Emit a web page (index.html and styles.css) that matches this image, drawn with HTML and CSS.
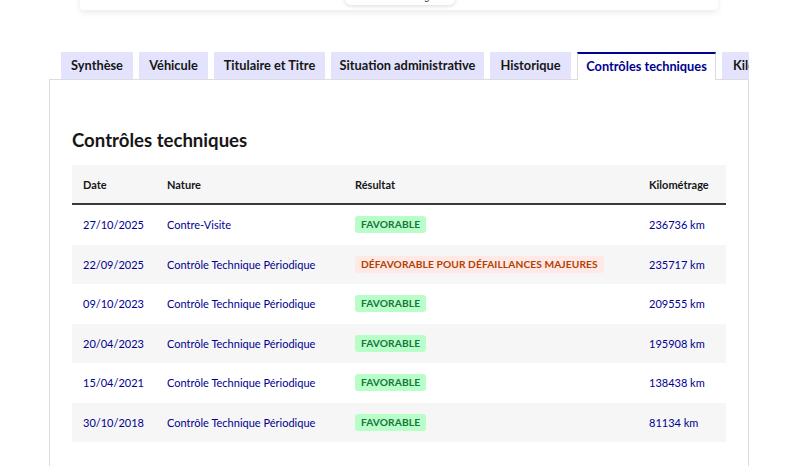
FILE: index.html
```html
<!DOCTYPE html>
<html lang="fr">
<head>
<meta charset="utf-8">
<link rel="stylesheet" href="styles.css">
</head>
<body>
<div class="topbar">
  <div class="url-pill">histovec.interieur.gouv.fr</div>
</div>
<div class="page">
  <nav class="tabs">
    <div class="tab w1">Synthèse</div>
    <div class="tab w2">Véhicule</div>
    <div class="tab w3">Titulaire et Titre</div>
    <div class="tab w4">Situation administrative</div>
    <div class="tab w5">Historique</div>
    <div class="tab w6 active">Contrôles techniques</div>
    <div class="tab cut">Kilométrage</div>
  </nav>
  <section class="panel">
    <h2 class="title">Contrôles techniques</h2>
    <div class="table">
      <div class="row head">
        <div>Date</div><div>Nature</div><div>Résultat</div><div>Kilométrage</div>
      </div>
      <div class="row">
        <div>27/10/2025</div><div>Contre-Visite</div><div><span class="badge ok">Favorable</span></div><div>236736 km</div>
      </div>
      <div class="row alt">
        <div>22/09/2025</div><div>Contrôle Technique Périodique</div><div><span class="badge ko">Défavorable pour défaillances majeures</span></div><div>235717 km</div>
      </div>
      <div class="row">
        <div>09/10/2023</div><div>Contrôle Technique Périodique</div><div><span class="badge ok">Favorable</span></div><div>209555 km</div>
      </div>
      <div class="row alt">
        <div>20/04/2023</div><div>Contrôle Technique Périodique</div><div><span class="badge ok">Favorable</span></div><div>195908 km</div>
      </div>
      <div class="row">
        <div>15/04/2021</div><div>Contrôle Technique Périodique</div><div><span class="badge ok">Favorable</span></div><div>138438 km</div>
      </div>
      <div class="row alt">
        <div>30/10/2018</div><div>Contrôle Technique Périodique</div><div><span class="badge ok">Favorable</span></div><div>81134 km</div>
      </div>
    </div>
  </section>
</div>
</body>
</html>
```

FILE: styles.css
```css
* { box-sizing: border-box; }
html, body { margin: 0; padding: 0; background: #fff; }
body {
  font-family: Lato, "Noto Sans", sans-serif;
  color: #161616;
  width: 798px;
  height: 466px;
  overflow: hidden;
  position: relative;
}
.topbar {
  position: absolute;
  left: 80px;
  top: -10px;
  width: 638px;
  height: 20px;
  background: #fff;
  box-shadow: 0 3px 6px rgba(0,0,0,0.08);
  border-radius: 4px;
}
.url-pill {
  position: absolute;
  left: 265px;
  top: 0;
  width: 110px;
  height: 15px;
  background: #fff;
  border-radius: 6px;
  box-shadow: 0 1px 4px rgba(0,0,0,0.15);
  font-family: "Liberation Sans", sans-serif;
  font-size: 10px;
  line-height: 10px;
  text-align: center;
  color: #333;
  padding-top: 2px;
}
.page {
  padding: 52px 0 0 49px;
  width: 749px;
}
.tabs {
  display: flex;
  gap: 6px;
  padding-left: 12px;
  height: 28px;
  overflow: hidden;
  position: relative;
  z-index: 1;
  margin-bottom: -1px;
}
.tab {
  flex: none;
  background: #e3e3fd;
  font-size: 12.8px;
  font-weight: 700;
  color: #161616;
  height: 27px;
  line-height: 27px;
  text-align: center;
  white-space: nowrap;
}
.w1 { width: 72px; }
.w2 { width: 69px; }
.w3 { width: 111px; }
.w4 { width: 153px; }
.w5 { width: 81px; }
.w6 { width: 139px; }
.tab.active {
  background: #fff;
  color: #000091;
  border-top: 2px solid #000091;
  border-left: 1px solid #ddd;
  border-right: 1px solid #ddd;
  line-height: 25px;
  height: 28px;
}
.tab.cut { width: 27px; padding: 0 0 0 11px; text-align: left; overflow: hidden; }
.panel {
  border: 1px solid #ddd;
  border-bottom: none;
  height: 400px;
  padding: 46px 22px 0 22px;
}
.title {
  margin: 0 0 11px;
  font-size: 18.6px;
  line-height: 28px;
  font-weight: 700;
  color: #161616;
}
.table { width: 654px; }
.row {
  display: grid;
  grid-template-columns: 84px 188px 294px 1fr;
  padding-left: 11px;
  height: 39.5px;
  align-items: center;
  font-size: 11px;
  color: #000091;
  background: #fff;
}
.row.alt { background: #f6f6f6; }
.row.head {
  background: #f6f6f6;
  color: #161616;
  font-weight: 700;
  font-size: 11px;
  height: 40px;
  border-bottom: 2px solid #3a3a3a;
}
.badge {
  display: inline-block;
  font-size: 10.2px;
  font-weight: 700;
  text-transform: uppercase;
  letter-spacing: 0.1px;
  padding: 0 6px;
  height: 17px;
  line-height: 17px;
  border-radius: 3px;
}
.badge.ok { background: #b8fec9; color: #18753c; }
.badge.ko { background: #ffe9e6; color: #b34000; }
```
